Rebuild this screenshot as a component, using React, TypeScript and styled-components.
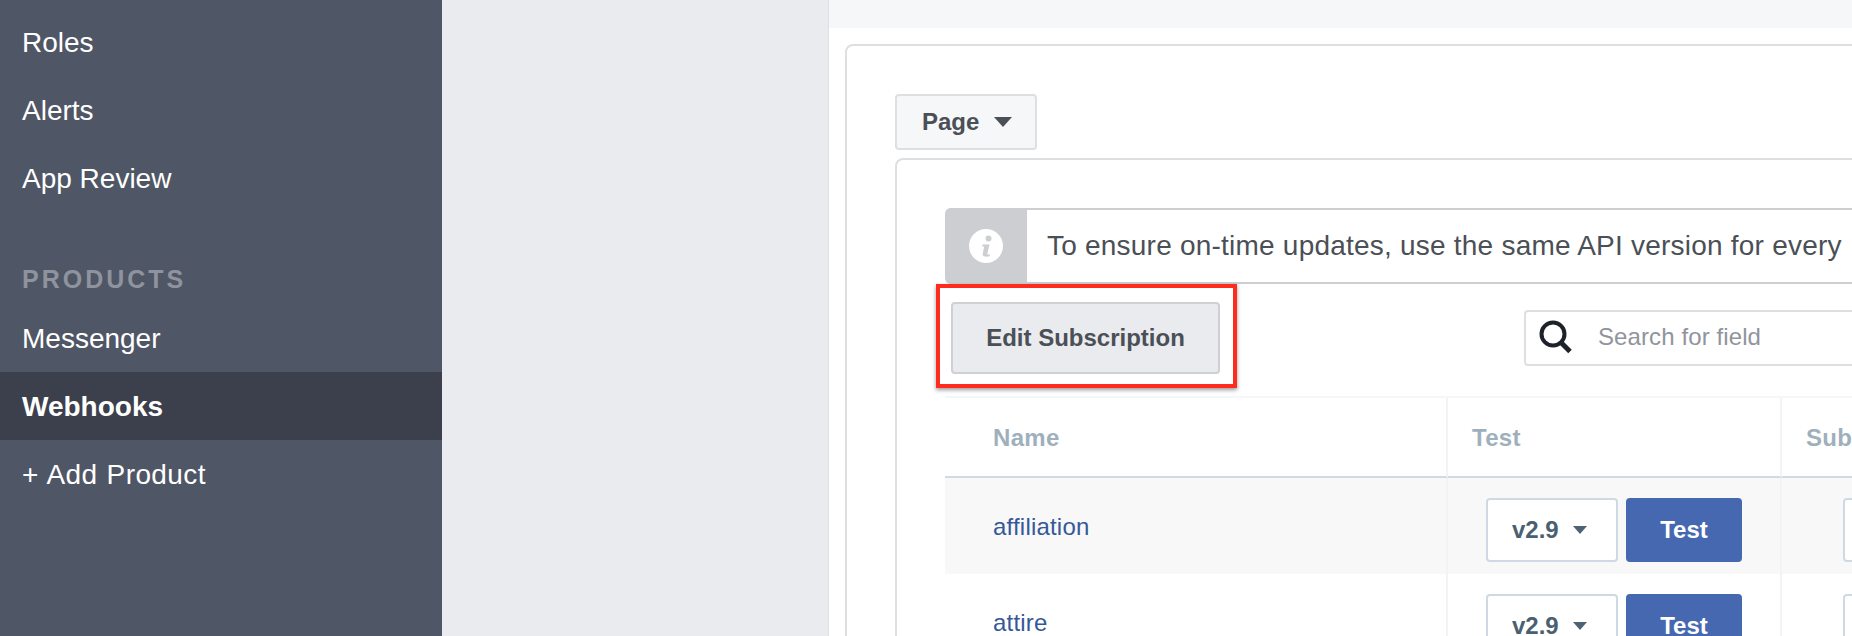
import React from "react";
import styled, { createGlobalStyle } from "styled-components";

const GlobalStyle = createGlobalStyle`
  html, body {
    margin: 0;
    padding: 0;
    background: #e9ebee;
  }
  * {
    box-sizing: border-box;
  }
`;

const Page = styled.div`
  display: flex;
  width: 1852px;
  height: 636px;
  overflow: hidden;
  font-family: "Liberation Sans", Arial, sans-serif;
`;

const Sidebar = styled.nav`
  flex: 0 0 442px;
  padding-top: 8px;
  background: #4f5665;
`;

const NavItem = styled.div<{ $active?: boolean }>`
  display: flex;
  align-items: center;
  height: 68px;
  padding: 2px 0 0 22px;
  font-size: 28px;
  font-weight: ${(props) => (props.$active ? 700 : 400)};
  color: #fff;
  background: ${(props) => (props.$active ? "#3b404c" : "transparent")};
`;

const AddItem = styled(NavItem)`
  letter-spacing: 0.4px;
  word-spacing: 1px;
  white-space: pre;
`;

const NavHeading = styled.div`
  height: 44px;
  margin-top: 48px;
  padding: 5px 0 0 22px;
  font-size: 25px;
  line-height: 28px;
  font-weight: 700;
  letter-spacing: 3px;
  color: #8e939d;
`;

const Gutter = styled.div`
  flex: 0 0 386px;
  background: #e9ebee;
`;

const Main = styled.main`
  flex: 1;
  min-width: 0;
  border-left: 1px solid #dddfe2;
  background: #fff;
  overflow: hidden;
`;

const TopBar = styled.div`
  height: 28px;
  background: #f6f7f9;
`;

const Card = styled.section`
  width: 1400px;
  margin: 16px 0 0 16px;
  padding: 48px 0 0 48px;
  border: 2px solid #dddfe2;
  border-radius: 8px;
`;

const PageButton = styled.div`
  display: flex;
  align-items: center;
  gap: 15px;
  width: 142px;
  height: 56px;
  padding-left: 25px;
  border: 2px solid #dddfe2;
  border-radius: 4px;
  background: #f6f7f9;
  font-size: 24px;
  font-weight: 700;
  color: #4b4f56;
`;

const Caret = styled.span<{ $color: string; $w: number; $h: number }>`
  display: block;
  width: 0;
  height: 0;
  border-left: ${(props) => props.$w / 2}px solid transparent;
  border-right: ${(props) => props.$w / 2}px solid transparent;
  border-top: ${(props) => props.$h}px solid ${(props) => props.$color};
`;

const InnerCard = styled.div`
  width: 1300px;
  margin-top: 8px;
  padding: 48px 0 0 48px;
  border: 2px solid #dddfe2;
  border-radius: 8px;
`;

const Notice = styled.div`
  display: flex;
  width: 1100px;
  height: 76px;
  border: 2px solid #cdced2;
  border-left: 0;
  border-radius: 6px;
`;

const NoticeIcon = styled.div`
  display: flex;
  align-items: center;
  justify-content: center;
  flex: 0 0 82px;
  margin: -2px 0;
  border-radius: 6px 0 0 6px;
  background: #cdced2;
`;

const NoticeText = styled.div`
  display: flex;
  align-items: center;
  padding-left: 20px;
  font-size: 28px;
  letter-spacing: 0.22px;
  white-space: nowrap;
  color: #4b4f56;
`;

const Toolbar = styled.div`
  position: relative;
  display: flex;
  padding: 18px 0 22px 6px;
`;

const EditButton = styled.div`
  display: flex;
  align-items: center;
  justify-content: center;
  width: 269px;
  height: 72px;
  border: 2px solid #ced0d4;
  border-radius: 4px;
  background: #e9ebee;
  font-size: 24px;
  font-weight: 700;
  color: #4b4f56;
`;

const Highlight = styled.div`
  position: absolute;
  left: -9px;
  top: 0;
  width: 301px;
  height: 104px;
  border: 4px solid #fe2c1f;
  box-shadow: 0 2px 4px rgba(0, 0, 0, 0.4);
`;

const SearchBox = styled.div`
  display: flex;
  align-items: center;
  gap: 25px;
  width: 500px;
  height: 56px;
  margin: 8px 0 0 304px;
  padding: 0 0 2px 13px;
  border: 2px solid #dddfe2;
  border-radius: 4px;
  font-size: 24px;
  letter-spacing: 0.1px;
  color: #90949c;
`;

const Table = styled.div`
  display: grid;
  grid-template-columns: 503px 334px 1fr;
  border-top: 2px solid #f5f6f7;
`;

const HeadCell = styled.div<{ $last?: boolean }>`
  display: flex;
  align-items: center;
  height: 80px;
  padding: 2px 0 0 ${(props) => (props.$last ? 24 : 48)}px;
  border-right: 2px solid #f2f3f5;
  border-bottom: 2px solid #d0dae5;
  font-size: 24px;
  font-weight: 700;
  letter-spacing: 0.3px;
  white-space: nowrap;
  color: #9fb0bd;
`;

const Cell = styled.div<{ $shaded?: boolean }>`
  display: flex;
  align-items: flex-start;
  height: 96px;
  padding-top: 20px;
  border-right: 2px solid #f2f3f5;
  background: ${(props) => (props.$shaded ? "#f8f8f8" : "#fff")};
`;

const NameCell = styled(Cell)`
  align-items: center;
  padding: 2px 0 0 48px;
`;

const FieldLink = styled.span`
  font-size: 24px;
  letter-spacing: 0.2px;
  color: #365899;
`;

const TestCell = styled(Cell)`
  gap: 8px;
  padding-left: 38px;
`;

const SubscribeCell = styled(Cell)`
  padding-left: 61px;
`;

const VersionSelect = styled.div`
  display: flex;
  align-items: center;
  gap: 14px;
  width: 132px;
  height: 64px;
  padding-left: 24px;
  border: 2px solid #ced9e4;
  border-radius: 4px;
  background: #fff;
  font-size: 24px;
  font-weight: 700;
  color: #4b5f72;
`;

const TestButton = styled.div`
  display: flex;
  align-items: center;
  justify-content: center;
  width: 116px;
  height: 64px;
  border-radius: 4px;
  background: #4668b0;
  font-size: 24px;
  font-weight: 700;
  color: #fff;
`;

const InfoIcon = () => (
  <svg width="34" height="34" viewBox="0 0 34 34">
    <circle cx="17" cy="17" r="17" fill="#fff" />
    <circle cx="19.5" cy="9.5" r="3" fill="#cdced2" />
    <path
      d="M13.5 15.5h7l-2.2 9c-.2.8.4 1.2 2.7.9l-.4 1.9c-2.6.6-7.4.8-6.9-2.3l1.5-7.4h-2z"
      fill="#cdced2"
    />
  </svg>
);

const SearchIcon = () => (
  <svg width="34" height="34" viewBox="0 0 34 34">
    <circle cx="14" cy="14" r="11.5" fill="none" stroke="#1d2129" strokeWidth="4" />
    <path d="M21.5 22l9.5 9.5" fill="none" stroke="#1d2129" strokeWidth="5" />
  </svg>
);

const fields = ["affiliation", "attire"];

const App = () => {
  return (
    <>
      <GlobalStyle />
      <Page>
        <Sidebar>
          <NavItem>Roles</NavItem>
          <NavItem>Alerts</NavItem>
          <NavItem>App Review</NavItem>
          <NavHeading>PRODUCTS</NavHeading>
          <NavItem>Messenger</NavItem>
          <NavItem $active>Webhooks</NavItem>
          <AddItem>+ Add Product</AddItem>
        </Sidebar>
        <Gutter />
        <Main>
          <TopBar />
          <Card>
            <PageButton>
              Page
              <Caret $color="#4b4f56" $w={18} $h={10} />
            </PageButton>
            <InnerCard>
              <Notice>
                <NoticeIcon>
                  <InfoIcon />
                </NoticeIcon>
                <NoticeText>To ensure on-time updates, use the same API version for every</NoticeText>
              </Notice>
              <Toolbar>
                <EditButton>Edit Subscription</EditButton>
                <Highlight />
                <SearchBox>
                  <SearchIcon />
                  <span>Search for field</span>
                </SearchBox>
              </Toolbar>
              <Table>
                <HeadCell>Name</HeadCell>
                <HeadCell $last>Test</HeadCell>
                <HeadCell $last>Subscribe</HeadCell>
                {fields.map((field, i) => (
                  <React.Fragment key={field}>
                    <NameCell $shaded={i === 0}>
                      <FieldLink>{field}</FieldLink>
                    </NameCell>
                    <TestCell $shaded={i === 0}>
                      <VersionSelect>
                        v2.9
                        <Caret $color="#4e6275" $w={14} $h={8} />
                      </VersionSelect>
                      <TestButton>Test</TestButton>
                    </TestCell>
                    <SubscribeCell $shaded={i === 0}>
                      <VersionSelect />
                    </SubscribeCell>
                  </React.Fragment>
                ))}
              </Table>
            </InnerCard>
          </Card>
        </Main>
      </Page>
    </>
  );
};

export default App;
